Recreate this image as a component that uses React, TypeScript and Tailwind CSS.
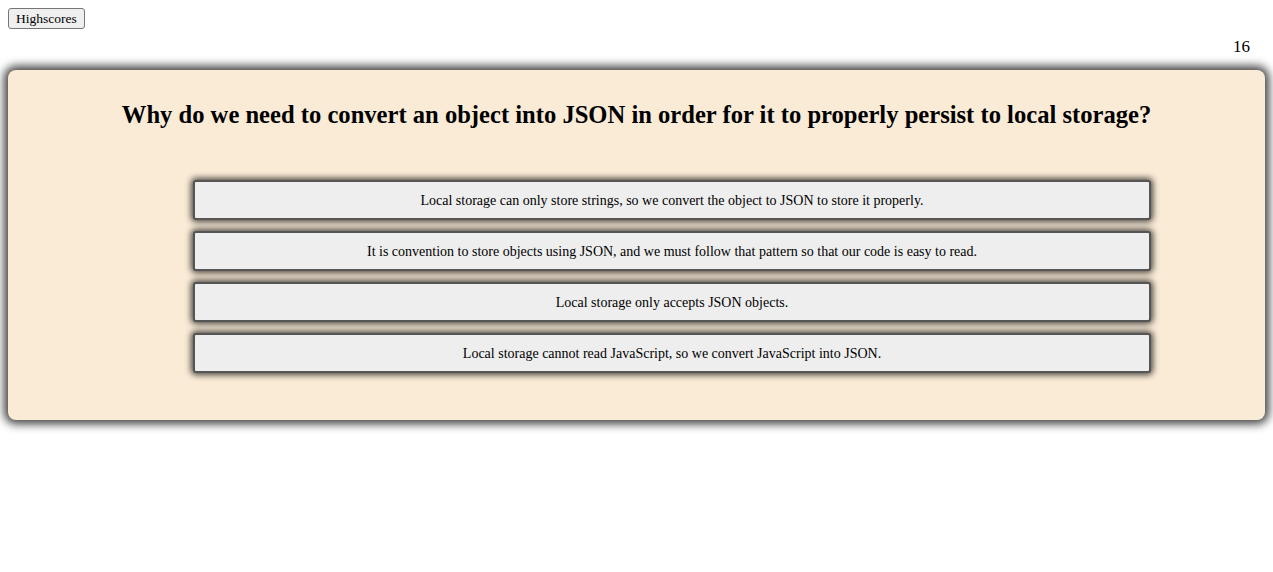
import React from 'react';

const answers = [
    'Local storage can only store strings, so we convert the object to JSON to store it properly.',
    'It is convention to store objects using JSON, and we must follow that pattern so that our code is easy to read.',
    'Local storage only accepts JSON objects.',
    'Local storage cannot read JavaScript, so we convert JavaScript into JSON.',
];

const App: React.FC = () => {
    return (
        <div className="p-2 bg-white min-h-[572px] text-black" style={{ fontFamily: '"Liberation Serif", serif' }}>
            <button className="block h-[21px] px-[7px] text-[13.5px] leading-none bg-[#efefef] border border-[#767676] rounded-[3px]">
                Highscores
            </button>

            <div className="flex justify-end pr-[15px] mt-[9px] text-[17px] leading-[17px] h-[17px]">16</div>

            <div className="mt-[15px] bg-[#faebd7] rounded-lg shadow-[0_0_10px_4px_rgba(0,0,0,0.75)] h-[350px] pt-[30px]">
                <h2 className="text-center font-bold text-[24.6px] leading-[30px]">
                    Why do we need to convert an object into JSON in order for it to properly persist to local storage?
                </h2>

                <ul className="mt-[50px] flex flex-col gap-[11px] pl-[185px] pr-[114px]">
                    {answers.map((a) => (
                        <li key={a}>
                            <button className="w-full h-[40px] text-[14px] bg-[#eeeeee] border-2 border-[#555] rounded-[3px] shadow-[0_0_6px_2px_rgba(0,0,0,0.7)]">
                                {a}
                            </button>
                        </li>
                    ))}
                </ul>
            </div>
        </div>
    );
};

export default App;
